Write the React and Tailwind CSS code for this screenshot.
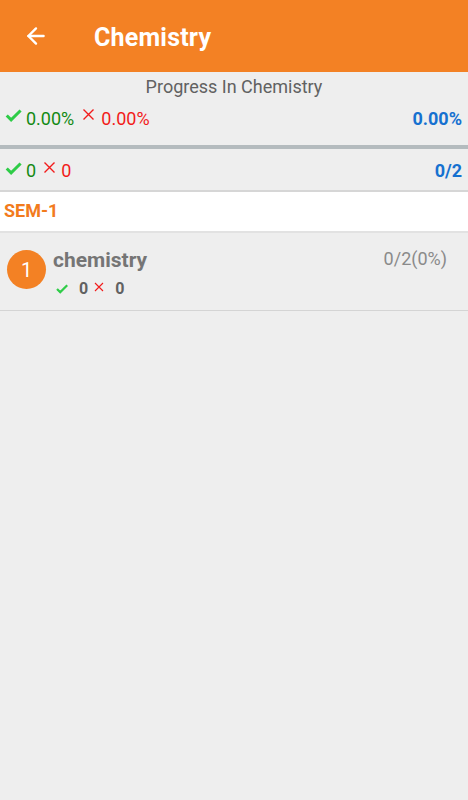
import { ArrowLeft } from 'lucide-react';

const Check = ({ className }) => (
    <svg viewBox="0 0 24 24" className={className} fill="currentColor">
        <path d="M9 16.2 4.8 12l-1.4 1.4L9 19 21 7l-1.4-1.4z" strokeWidth="1.8" stroke="currentColor" />
    </svg>
);

const Cross = ({ className }) => (
    <svg viewBox="0 0 24 24" className={className} fill="none" stroke="currentColor" strokeWidth="2.2">
        <path d="M4 4l16 16M20 4 4 20" />
    </svg>
);

export default function App() {
    return (
        <div className="w-[468px] h-[800px] bg-[#eeeeee] overflow-hidden" style={{ fontFamily: 'Roboto, "Liberation Sans", sans-serif' }}>
            {/* Toolbar */}
            <div className="h-[72px] bg-[#f38124] flex items-center">
                <ArrowLeft className="w-[26px] h-[26px] text-white ml-[23px]" strokeWidth={2.2} />
                <h1 className="ml-[45px] text-white text-[25px] font-bold tracking-[0.2px] mt-[3px]">Chemistry</h1>
            </div>

            {/* Overall progress */}
            <div className="h-[73px] pt-[2px]">
                <p className="text-center text-[18px] text-[#616161] leading-[26px]">Progress In Chemistry</p>
                <div className="flex items-center px-[4px] mt-[4px] h-[28px]">
                    <Check className="w-[19px] h-[19px] text-[#2ecc47] -mt-[5px]" />
                    <span className="ml-[3px] text-[18px] text-[#138a13]">0.00%</span>
                    <Cross className="w-[15px] h-[15px] text-[#f21b1b] ml-[7px] -mt-[8px]" />
                    <span className="ml-[5px] text-[18px] text-[#f21b1b]">0.00%</span>
                    <span className="ml-auto text-[18px] font-bold text-[#1671d0] mr-[2px]">0.00%</span>
                </div>
            </div>
            <div className="h-[4px] bg-[#b4bbbe]" />

            {/* Counts */}
            <div className="h-[41px] flex items-center px-[4px] pt-[2px]">
                <Check className="w-[19px] h-[19px] text-[#2ecc47] -mt-[5px]" />
                <span className="ml-[3px] text-[18px] text-[#138a13]">0</span>
                <Cross className="w-[15px] h-[15px] text-[#f21b1b] ml-[6px] -mt-[7px]" />
                <span className="ml-[4px] text-[18px] text-[#f21b1b]">0</span>
                <span className="ml-auto text-[18px] font-bold text-[#1671d0] mr-[2px]">0/2</span>
            </div>
            <div className="h-[2px] bg-[#d6d6d6]" />

            {/* Semester header */}
            <div className="h-[39px] bg-white flex items-center px-[4px]">
                <span className="text-[18px] font-bold text-[#f27b1d] -mt-[2px]">SEM-1</span>
            </div>
            <div className="h-[2px] bg-[#e2e2e2]" />

            {/* Subject row */}
            <div className="h-[78px] flex pl-[7px] pr-[21px] pt-[16px] border-b border-[#d4d4d4]">
                <div className="w-[39px] h-[39px] rounded-full bg-[#f38124] flex items-center justify-center text-white text-[20px] mt-[1px]">1</div>
                <div className="ml-[7px]">
                    <p className="text-[21px] font-bold text-[#757575] leading-[24px] -mt-[1px]">chemistry</p>
                    <div className="flex items-center mt-[5px] ml-[2px]">
                        <Check className="w-[14px] h-[14px] text-[#2ecc47]" />
                        <span className="ml-[10px] text-[16px] font-bold text-[#616161]">0</span>
                        <Cross className="w-[12px] h-[12px] text-[#f21b1b] ml-[5px] -mt-[4px]" />
                        <span className="ml-[10px] text-[16px] font-bold text-[#616161]">0</span>
                    </div>
                </div>
                <span className="ml-auto text-[18px] text-[#8a8a8a] leading-[22px] -mt-[1px]">0/2(0%)</span>
            </div>
        </div>
    );
}
